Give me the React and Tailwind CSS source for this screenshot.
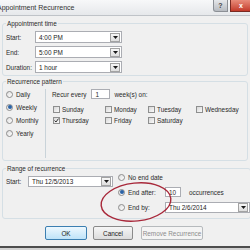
import React from 'react';

const Arrow = () => (
  <svg width="5" height="3" viewBox="0 0 5 3">
    <path d="M0 0h5L2.5 3z" fill="#1a1a1a" />
  </svg>
);

const Combo = ({ value, className }) => (
  <div className={`flex items-center bg-white border border-[#abadb3] ${className}`}>
    <span className="flex-1 pl-[3px] text-[#222] whitespace-nowrap overflow-hidden">{value}</span>
    <span className="w-[10px] h-[9px] mr-[1px] flex items-center justify-center border border-[#a3a3a3] bg-gradient-to-b from-[#f7f7f7] to-[#dedede]">
      <Arrow />
    </span>
  </div>
);

const Radio = ({ checked }) => (
  <span className="w-[7px] h-[7px] shrink-0 rounded-full border border-[#8d8d8d] bg-gradient-to-br from-[#dedede] to-white flex items-center justify-center">
    {checked && <span className="w-[4px] h-[4px] rounded-full bg-[#2a62a6]" />}
  </span>
);

const Check = ({ checked }) => (
  <span className="w-[7px] h-[7px] shrink-0 border border-[#8e8f8f] bg-gradient-to-br from-[#d8d8d8] to-[#fafafa] flex items-center justify-center">
    {checked && (
      <svg width="5" height="5" viewBox="0 0 5 5">
        <path d="M0.5 2.5L2 4L4.5 0.6" stroke="#333" strokeWidth="1" fill="none" />
      </svg>
    )}
  </span>
);

const Day = ({ label, checked }) => (
  <div className="flex items-center gap-[2px]">
    <Check checked={checked} />
    <span>{label}</span>
  </div>
);

const App = () => {
  return (
    <div className="relative w-[250px] h-[250px] overflow-hidden flex flex-col bg-[#f0f0f0] text-[6.4px] leading-[7px] text-[#2a2a2a] font-['Liberation_Sans',Arial,sans-serif]">
      {/* title bar */}
      <div className="h-[16px] shrink-0 flex items-start justify-between border-b border-[#bfc3c8] bg-gradient-to-b from-[#f7f8f9] to-[#e6e8eb]">
        <span className="ml-[-3px] mt-[4px] text-[7px] leading-[8px] text-[#333] whitespace-nowrap">Appointment Recurrence</span>
        <div className="flex gap-[2px] mr-[-2px]">
          <div className="w-[15px] h-[12px] flex items-center justify-center rounded-bl-[3px] border border-t-0 border-[#8c9096] bg-gradient-to-b from-[#e6e8eb] to-[#b7bbc1] text-[7px] font-bold text-[#444]">?</div>
          <div className="w-[22px] h-[12px] flex items-center justify-center rounded-br-[3px] border border-t-0 border-[#7a2a22] bg-gradient-to-b from-[#e88b7a] to-[#c3392a] text-[7px] font-bold text-white">x</div>
        </div>
      </div>

      {/* appointment time */}
      <fieldset className="mx-[2px] mt-[4px] border border-[#d5dfe5] rounded-[3px] pb-[2px]">
        <legend className="ml-[3px] px-[1px] leading-[7px]">Appointment time</legend>
        <div className="pt-[4px] flex flex-col gap-[3px]">
          <div className="flex items-center h-[12px]">
            <span className="w-[32px] pl-[3px]">Start:</span>
            <Combo value="4:00 PM" className="w-[87px] h-[12px]" />
          </div>
          <div className="flex items-center h-[12px]">
            <span className="w-[32px] pl-[3px]">End:</span>
            <Combo value="5:00 PM" className="w-[87px] h-[12px]" />
          </div>
          <div className="flex items-center h-[12px]">
            <span className="w-[32px] pl-[3px]">Duration:</span>
            <Combo value="1 hour" className="w-[87px] h-[12px]" />
          </div>
        </div>
      </fieldset>

      {/* recurrence pattern */}
      <fieldset className="mx-[2px] mt-[2px] border border-[#d5dfe5] rounded-[3px] pb-[2px]">
        <legend className="ml-[3px] px-[1px] leading-[7px]">Recurrence pattern</legend>
        <div className="pt-[4px] flex">
          <div className="w-[43px] h-[69px] border-r border-[#c9d3d9] flex flex-col gap-[3px] pl-[3px]">
            {['Daily', 'Weekly', 'Monthly', 'Yearly'].map((d) => (
              <div key={d} className="flex items-center gap-[3px] h-[10px]">
                <Radio checked={d === 'Weekly'} />
                <span>{d}</span>
              </div>
            ))}
          </div>
          <div className="pl-[6px] flex flex-col">
            <div className="flex items-center h-[10px]">
              <span>Recur every</span>
              <div className="ml-[5px] w-[19px] h-[10px] bg-white border border-[#abadb3] pl-[3px] flex items-center">1</div>
              <span className="ml-[4px]">week(s) on:</span>
            </div>
            <div className="mt-[7px] pl-[1px] grid grid-cols-[52px_43px_48px_auto] gap-y-[4px]">
              <Day label="Sunday" />
              <Day label="Monday" />
              <Day label="Tuesday" />
              <Day label="Wednesday" />
              <Day label="Thursday" checked />
              <Day label="Friday" />
              <Day label="Saturday" />
            </div>
          </div>
        </div>
      </fieldset>

      {/* range of recurrence */}
      <fieldset className="mx-[2px] mt-[4px] border border-[#d5dfe5] rounded-[3px] pb-[5px]">
        <legend className="ml-[3px] px-[1px] leading-[7px]">Range of recurrence</legend>
        <div className="flex items-start">
          <div className="mt-[4px] flex items-center h-[11px]">
            <span className="w-[25px] pl-[3px]">Start:</span>
            <Combo value="Thu 12/5/2013" className="w-[85px] h-[11px]" />
          </div>
          <div className="ml-[5px] flex flex-col gap-[5px]">
            <div className="flex items-center h-[10px] gap-[3px]">
              <Radio />
              <span>No end date</span>
            </div>
            <div className="flex items-center h-[10px] gap-[3px]">
              <Radio checked />
              <span className="w-[34px]">End after:</span>
              <div className="w-[16px] h-[10px] bg-white border border-[#abadb3] pl-[3px] flex items-center">10</div>
              <span className="ml-[5px]">occurrences</span>
            </div>
            <div className="flex items-center h-[11px] gap-[3px]">
              <Radio />
              <span className="w-[34px]">End by:</span>
              <Combo value="Thu 2/6/2014" className="w-[85px] h-[11px]" />
            </div>
          </div>
        </div>
      </fieldset>

      {/* buttons */}
      <div className="mt-[7px] h-[14px] flex pl-[45px]">
        <button className="w-[42px] h-[14px] rounded-[2px] border border-[#3c7fb1] bg-gradient-to-b from-[#eef8fe] to-[#bfe3f8] text-[6.4px] text-[#222]">OK</button>
        <button className="ml-[6px] w-[40px] h-[14px] rounded-[2px] border border-[#8a8a8a] bg-gradient-to-b from-[#f6f6f6] to-[#dcdcdc] text-[6.4px] text-[#222]">Cancel</button>
        <button className="ml-[8px] w-[62px] h-[14px] rounded-[2px] border border-[#b6babd] bg-[#f4f4f4] text-[6.4px] text-[#8c8c8c]">Remove Recurrence</button>
      </div>

      <div className="mt-[6px] h-[2px] bg-[#4d4d4d]" />
      <div className="flex-1 bg-[#d2d2d2]" />

      {/* red hand-drawn ellipse */}
      <svg className="absolute left-[98px] top-[179px]" width="78" height="48" viewBox="0 0 78 48">
        <ellipse cx="38" cy="23" rx="35" ry="19" transform="rotate(-6 38 23)" fill="none" stroke="#a8283a" strokeWidth="1.4" />
      </svg>
    </div>
  );
};

export default App;
